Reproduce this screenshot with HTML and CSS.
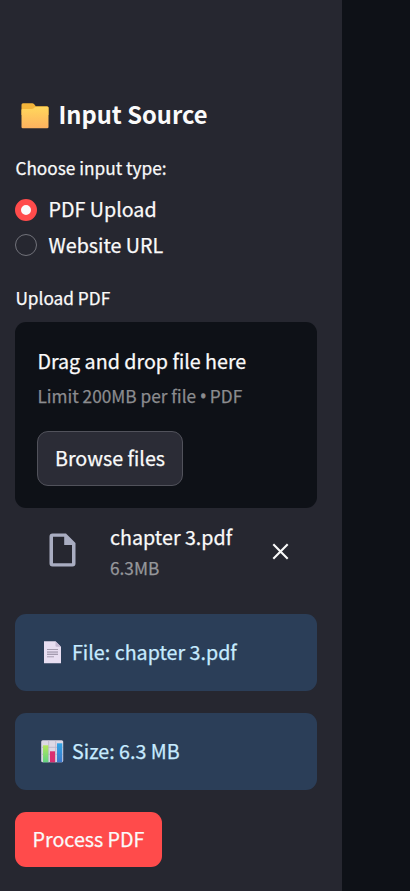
FILE: index.html
```html
<!DOCTYPE html>
<html lang="en">
<head>
<meta charset="utf-8">
<title>Input Source</title>
<link rel="stylesheet" href="styles.css">
</head>
<body>
<aside class="sidebar">
  <h2 class="heading">
    <svg class="folder" width="28" height="26" viewBox="0 0 28 26">
      <defs>
        <linearGradient id="fold" x1="0" y1="0" x2="0" y2="1"><stop offset="0" stop-color="#ffd75c"/><stop offset="1" stop-color="#fdb25f"/></linearGradient>
      </defs>
      <path fill="#f3b53a" d="M2 .3h9.300q1 0 1.700.8l1.800 2.200H26q1.500 0 1.500 1.500V12H.5V1.800Q.5.300 2 .3z"/>
      <path fill="url(#fold)" d="M.5 7q0-1 1-1h9.300q1.200 0 2-.8l1-.9q.7-.6 1.700-.6H26.500q1 0 1 1V24q0 1.300-1.300 1.300H1.800Q.5 25.300.5 24z"/>
    </svg>
    <span>Input Source</span>
  </h2>
  <div class="label">Choose input type:</div>
  <div class="radios">
    <div class="radio"><span class="dot dot-on"></span><span class="radio-text">PDF Upload</span></div>
    <div class="radio"><span class="dot dot-off"></span><span class="radio-text">Website URL</span></div>
  </div>
  <div class="label upload-label">Upload PDF</div>
  <section class="dropzone">
    <div class="drop-title">Drag and drop file here</div>
    <div class="small limit">Limit 200MB per file <span class="bullet">•</span> PDF</div>
    <button class="btn browse">Browse files</button>
  </section>
  <div class="file-row">
    <svg class="file-icon" width="27" height="34" viewBox="0 0 27 34">
      <path fill="#a9adc1" fill-rule="evenodd" d="M3.500.5H17L26.500 10v20.500q0 3-3 3h-20q-3 0-3-3v-27q0-3 3-3zM4 3.800v26.400h19V12h-7.800V3.800z"/>
    </svg>
    <div class="file-meta">
      <div class="file-name">chapter 3.pdf</div>
      <div class="small">6.3MB</div>
    </div>
    <svg class="close" width="17" height="17" viewBox="0 0 17 17"><path d="M1.300 1.300l14.400 14.400M15.700 1.300L1.300 15.700" stroke="#fafafa" stroke-width="2.100" fill="none"/></svg>
  </div>
  <div class="alert">
    <svg class="emoji" width="24" height="24" viewBox="0 0 24 24">
      <path fill="#e8def1" d="M4 .3h11.500L21 5.800V22.300H4z"/>
      <path fill="#c4b8d2" d="M15.500.3L21 5.800h-4.500q-1 0-1-1z"/>
      <path fill="#cfc5d9" d="M7 10.500h11V14H7z"/>
      <path stroke="#a49baf" stroke-width="1" d="M7 8.500h11M7 11h11M7 13.500h11M7 15.800h7"/>
    </svg>
    <span>File: chapter 3.pdf</span>
  </div>
  <div class="alert">
    <svg class="emoji" width="24" height="24" viewBox="0 0 24 24">
      <defs>
        <linearGradient id="g" x1="0" y1="0" x2="0" y2="1"><stop offset="0" stop-color="#b5e65c"/><stop offset="1" stop-color="#62d383"/></linearGradient>
        <linearGradient id="b" x1="0" y1="0" x2="0" y2="1"><stop offset="0" stop-color="#31a4e5"/><stop offset="1" stop-color="#3d78cb"/></linearGradient>
      </defs>
      <rect x="1.200" y=".3" width="22" height="22" rx="1.500" fill="#dcd8e5"/>
      <path stroke="#b9b2c6" stroke-width=".8" d="M1.700 7.300h21M1.700 14.300h21M8.700.3v22M15.700.3v22" fill="none"/>
      <path fill="url(#g)" d="M3 5.300h5.300v17H3z"/>
      <path fill="#d92f70" d="M10 11.300h5v11h-5z"/>
      <path fill="url(#b)" d="M17 3.300h5.300v19H17z"/>
    </svg>
    <span>Size: 6.3 MB</span>
  </div>
  <button class="btn process">Process PDF</button>
</aside>
</body>
</html>
```

FILE: styles.css
```css
* { box-sizing: border-box; }
body {
  margin: 0;
  height: 891px;
  overflow: hidden;
  background: #0e1117;
  color: #fafafa;
  font-family: "Noto Sans CJK SC", sans-serif;
  font-size: 19.68px;
  line-height: 35px;
  white-space: nowrap;
  -webkit-text-stroke: 0.25px;
}
.sidebar {
  width: 342px;
  height: 891px;
  padding: 98px 25px 0 15px;
  background: #262730;
}
.heading {
  display: flex;
  align-items: center;
  margin: 0;
  height: 34px;
  padding-left: 5.5px;
  gap: 10px;
  font-size: 23.7px;
  line-height: 34px;
  font-weight: 700;
  -webkit-text-stroke: 0;
}
.folder { margin-top: 1px; }
.heading span { padding-bottom: 2px; }
.label { margin-top: 23px; height: 26px; padding-left: 0.4px; font-size: 17.25px; line-height: 26px; }
.radios { margin-top: 11px; }
.radio { display: flex; align-items: center; gap: 11.5px; height: 36px; }
.radio-text { padding-bottom: 3px; }
.dot { width: 22px; height: 22px; border-radius: 50%; border: 1.5px solid #71727a; }
.dot-on { border: 6.5px solid #ff4b4b; background: #fafafa; }
.dot-off { margin-bottom: 2px; }
.upload-label { margin-top: 21px; }
.dropzone {
  height: 186px;
  margin-top: 11px;
  padding: 21px 22px 22px;
  border-radius: 11px;
  background: #0e1117;
}
.drop-title { padding-left: 0.4px; }
.small { font-size: 17.25px; line-height: 28px; color: #96979b; }
.limit { margin-top: 4px; height: 28px; padding-left: 0.4px; color: #8b8c8f; }
.bullet { font-family: "Open Sans", sans-serif; letter-spacing: -0.5px; -webkit-text-stroke: 0.8px; }
.btn {
  display: block;
  height: 55px;
  padding: 0 0 2px;
  border: 0;
  border-radius: 11px;
  color: #fafafa;
  font: inherit;
  text-align: center;
}
.browse { width: 146px; margin-top: 21px; border: 1px solid #51525b; background: #2b2c36; }
.file-row { display: flex; height: 106px; padding: 12px 28px 0 34px; }
.file-icon { margin-top: 13px; }
.file-meta { flex: 1; margin-left: 34px; }
.file-name { height: 34px; line-height: 34px; }
.close { margin-top: 23px; }
.alert {
  display: flex;
  align-items: center;
  gap: 8px;
  height: 77px;
  margin-bottom: 22px;
  padding-left: 25px;
  border-radius: 11px;
  background: #2b3e58;
  color: #c7ebff;
}
.alert span { padding-bottom: 2px; }
.process { width: 147px; background: #ff4b4b; }
```
